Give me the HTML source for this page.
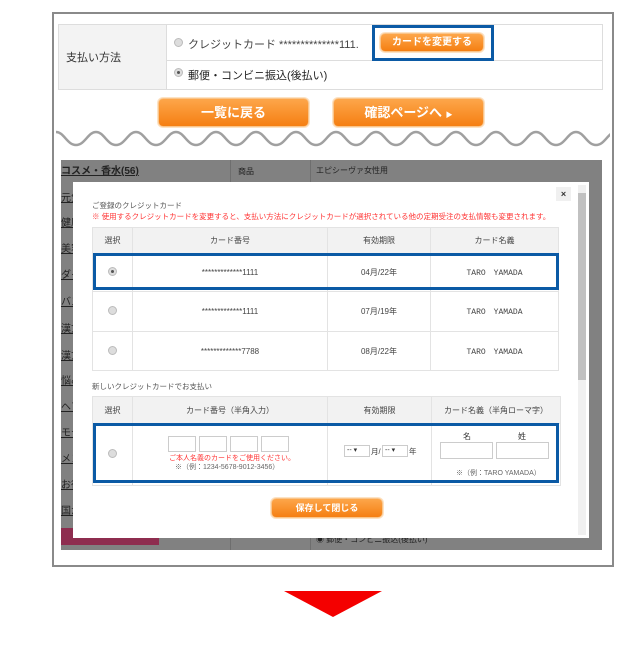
<!DOCTYPE html>
<html><head><meta charset="utf-8"><style>
*{margin:0;padding:0;box-sizing:border-box}
body{width:640px;height:648px;background:#fff;position:relative;overflow:hidden;font-family:"Liberation Sans","Noto Sans CJK JP",sans-serif;color:#333}
.a{position:absolute}
.obtn{position:absolute;background:linear-gradient(#fda64a,#f57f12);border:1px solid #f9c48a;border-radius:5px;color:#fff;font-weight:bold;text-align:center;box-shadow:0 0 0 1px #fde3c4}
.radio{position:absolute;width:9px;height:9px;border-radius:50%;background:#ddd;border:1px solid #bbb}
.radio.on::after{content:"";position:absolute;left:2px;top:2px;width:3px;height:3px;border-radius:50%;background:#555}
table{border-collapse:collapse;position:absolute;font-size:8px;color:#444}
td{border:1px solid #e3e3e3;text-align:center}
.hd td{background:#f2f2f2}
.side{position:absolute;left:61px;font-size:10px;color:#222;text-decoration:underline;width:12px;overflow:hidden;white-space:nowrap}
.box{position:absolute;border:1px solid #ccc;background:#fff}
</style></head><body>
<div class="a" style="left:52px;top:12px;width:562px;height:555px;border:2px solid #8a8a8a"></div>
<div class="a" style="left:58px;top:24px;width:545px;height:66px;border:1px solid #ddd"></div>
<div class="a" style="left:59px;top:25px;width:108px;height:64px;background:#f3f3f3;border-right:1px solid #ddd"></div>
<div class="a" style="left:167px;top:60px;width:435px;height:1px;background:#ddd"></div>
<div class="a" style="left:66px;top:49px;font-size:11px">支払い方法</div>
<div class="radio" style="left:174px;top:38px"></div>
<div class="a" style="left:188px;top:36px;font-size:11px;color:#444">クレジットカード **************111.</div>
<div class="radio on" style="left:174px;top:68px"></div>
<div class="a" style="left:188px;top:67px;font-size:11px;color:#222">郵便・コンビニ振込(後払い)</div>
<div class="obtn" style="left:380px;top:33px;width:104px;height:19px;font-size:10px;line-height:17px">カードを変更する</div>
<div class="a" style="left:372px;top:25px;width:122px;height:36px;border:3px solid #0b5aa5"></div>
<div class="obtn" style="left:158px;top:98px;width:151px;height:29px;font-size:13px;line-height:27px">一覧に戻る</div>
<div class="obtn" style="left:333px;top:98px;width:151px;height:29px;font-size:13px;line-height:27px">確認ページへ <span style="font-size:7px">▶</span></div>
<svg class="a" style="left:56px;top:128px" width="554" height="22">
<path fill="none" stroke="#a0a0a0" stroke-width="2.5" d="M0 4 C8 4 11 17 20 17 C29 17 32 4 40 4 C48 4 51 17 60 17 C69 17 72 4 80 4 C88 4 91 17 100 17 C109 17 112 4 120 4 C128 4 131 17 140 17 C149 17 152 4 160 4 C168 4 171 17 180 17 C189 17 192 4 200 4 C208 4 211 17 220 17 C229 17 232 4 240 4 C248 4 251 17 260 17 C269 17 272 4 280 4 C288 4 291 17 300 17 C309 17 312 4 320 4 C328 4 331 17 340 17 C349 17 352 4 360 4 C368 4 371 17 380 17 C389 17 392 4 400 4 C408 4 411 17 420 17 C429 17 432 4 440 4 C448 4 451 17 460 17 C469 17 472 4 480 4 C488 4 491 17 500 17 C509 17 512 4 520 4 C528 4 531 17 540 17 C549 17 552 4 560 4"/></svg>
<div class="a" style="left:61px;top:160px;width:541px;height:390px;background:#818181"></div>
<div class="a" style="left:230px;top:160px;width:1px;height:390px;background:#6e6e6e"></div>
<div class="a" style="left:310px;top:160px;width:1px;height:390px;background:#6e6e6e"></div>
<div class="a" style="left:61px;top:162px;font-size:10px;font-weight:bold;color:#222;text-decoration:underline">コスメ・香水(56)</div>
<div class="a" style="left:238px;top:166px;font-size:8px;color:#222">商品</div>
<div class="a" style="left:316px;top:165px;font-size:8px;color:#222">エピシーヴァ女性用</div>
<div class="side" style="top:189px">元気</div><div class="side" style="top:214px">健康</div><div class="side" style="top:240px">美容</div><div class="side" style="top:266px">ダイ</div><div class="side" style="top:293px">バス</div><div class="side" style="top:320px">漢方</div><div class="side" style="top:347px">漢方</div><div class="side" style="top:372px">悩み</div><div class="side" style="top:398px">ヘア</div><div class="side" style="top:424px">モデ</div><div class="side" style="top:450px">メン</div><div class="side" style="top:476px">お得</div><div class="side" style="top:502px">国か</div>
<div class="a" style="left:61px;top:528px;width:98px;height:17px;background:#8e2d4f"></div>
<div class="a" style="left:316px;top:534px;font-size:8px;color:#222">◉ 郵便・コンビニ振込(後払い)</div>
<div class="a" style="left:73px;top:182px;width:516px;height:356px;background:#fff"></div>
<div class="a" style="left:578px;top:185px;width:8px;height:350px;background:#f0f0f0"></div>
<div class="a" style="left:578px;top:193px;width:8px;height:187px;background:#c1c1c1"></div>
<div class="a" style="left:556px;top:187px;width:15px;height:14px;background:#f0f0f0;font-size:9px;font-weight:bold;text-align:center;line-height:14px">×</div>
<div class="a" style="left:92px;top:200px;font-size:7.5px;color:#555">ご登録のクレジットカード</div>
<div class="a" style="left:92px;top:211px;font-size:7.5px;color:#f33">※ 使用するクレジットカードを変更すると、支払い方法にクレジットカードが選択されている他の定期受注の支払情報も変更されます。</div>
<table style="left:92px;top:227px;width:467px">
<tr class="hd" style="height:26px"><td style="width:40px">選択</td><td style="width:195px">カード番号</td><td style="width:103px">有効期限</td><td>カード名義</td></tr>
<tr style="height:38px"><td><span class="radio on" style="position:relative;display:inline-block"></span></td><td>*************1111</td><td>04月/22年</td><td style="font-family:'Liberation Mono',monospace">TARO　YAMADA</td></tr>
<tr style="height:40px"><td><span class="radio" style="position:relative;display:inline-block"></span></td><td>*************1111</td><td>07月/19年</td><td style="font-family:'Liberation Mono',monospace">TARO　YAMADA</td></tr>
<tr style="height:39px"><td><span class="radio" style="position:relative;display:inline-block"></span></td><td>*************7788</td><td>08月/22年</td><td style="font-family:'Liberation Mono',monospace">TARO　YAMADA</td></tr>
</table>
<div class="a" style="left:93px;top:253px;width:466px;height:37px;border:3px solid #0b5aa5"></div>
<div class="a" style="left:92px;top:381px;font-size:7.5px;color:#555">新しいクレジットカードでお支払い</div>
<table style="left:92px;top:396px;width:469px">
<tr class="hd" style="height:27px"><td style="width:40px">選択</td><td style="width:195px">カード番号（半角入力）</td><td style="width:104px">有効期限</td><td>カード名義（半角ローマ字）</td></tr>
<tr style="height:62px"><td><span class="radio" style="position:relative;display:inline-block"></span></td><td></td><td></td><td></td></tr>
</table>
<div class="box" style="left:168px;top:436px;width:28px;height:16px"></div>
<div class="box" style="left:199px;top:436px;width:28px;height:16px"></div>
<div class="box" style="left:230px;top:436px;width:28px;height:16px"></div>
<div class="box" style="left:261px;top:436px;width:28px;height:16px"></div>
<div class="a" style="left:169px;top:453px;font-size:7px;color:#f33">ご本人名義のカードをご使用ください。</div>
<div class="a" style="left:175px;top:462px;font-size:7px;color:#666">※（例：1234-5678-9012-3456）</div>
<div class="box" style="left:344px;top:445px;width:26px;height:12px;font-size:7px;line-height:10px;padding-left:2px">-- ▾</div>
<div class="a" style="left:371px;top:446px;font-size:7.5px">月/</div>
<div class="box" style="left:382px;top:445px;width:26px;height:12px;font-size:7px;line-height:10px;padding-left:2px">-- ▾</div>
<div class="a" style="left:409px;top:446px;font-size:7.5px">年</div>
<div class="a" style="left:463px;top:431px;font-size:8px">名</div>
<div class="a" style="left:518px;top:431px;font-size:8px">姓</div>
<div class="box" style="left:440px;top:442px;width:53px;height:17px"></div>
<div class="box" style="left:496px;top:442px;width:53px;height:17px"></div>
<div class="a" style="left:456px;top:468px;font-size:7px;color:#666">※（例：TARO YAMADA）</div>
<div class="a" style="left:93px;top:423px;width:466px;height:60px;border:3px solid #0b5aa5"></div>
<div class="obtn" style="left:271px;top:498px;width:112px;height:20px;font-size:9px;line-height:18px">保存して閉じる</div>
<svg class="a" style="left:284px;top:591px" width="98" height="26"><polygon points="0,0 98,0 49,26" fill="#f40000"/></svg>
</body></html>
